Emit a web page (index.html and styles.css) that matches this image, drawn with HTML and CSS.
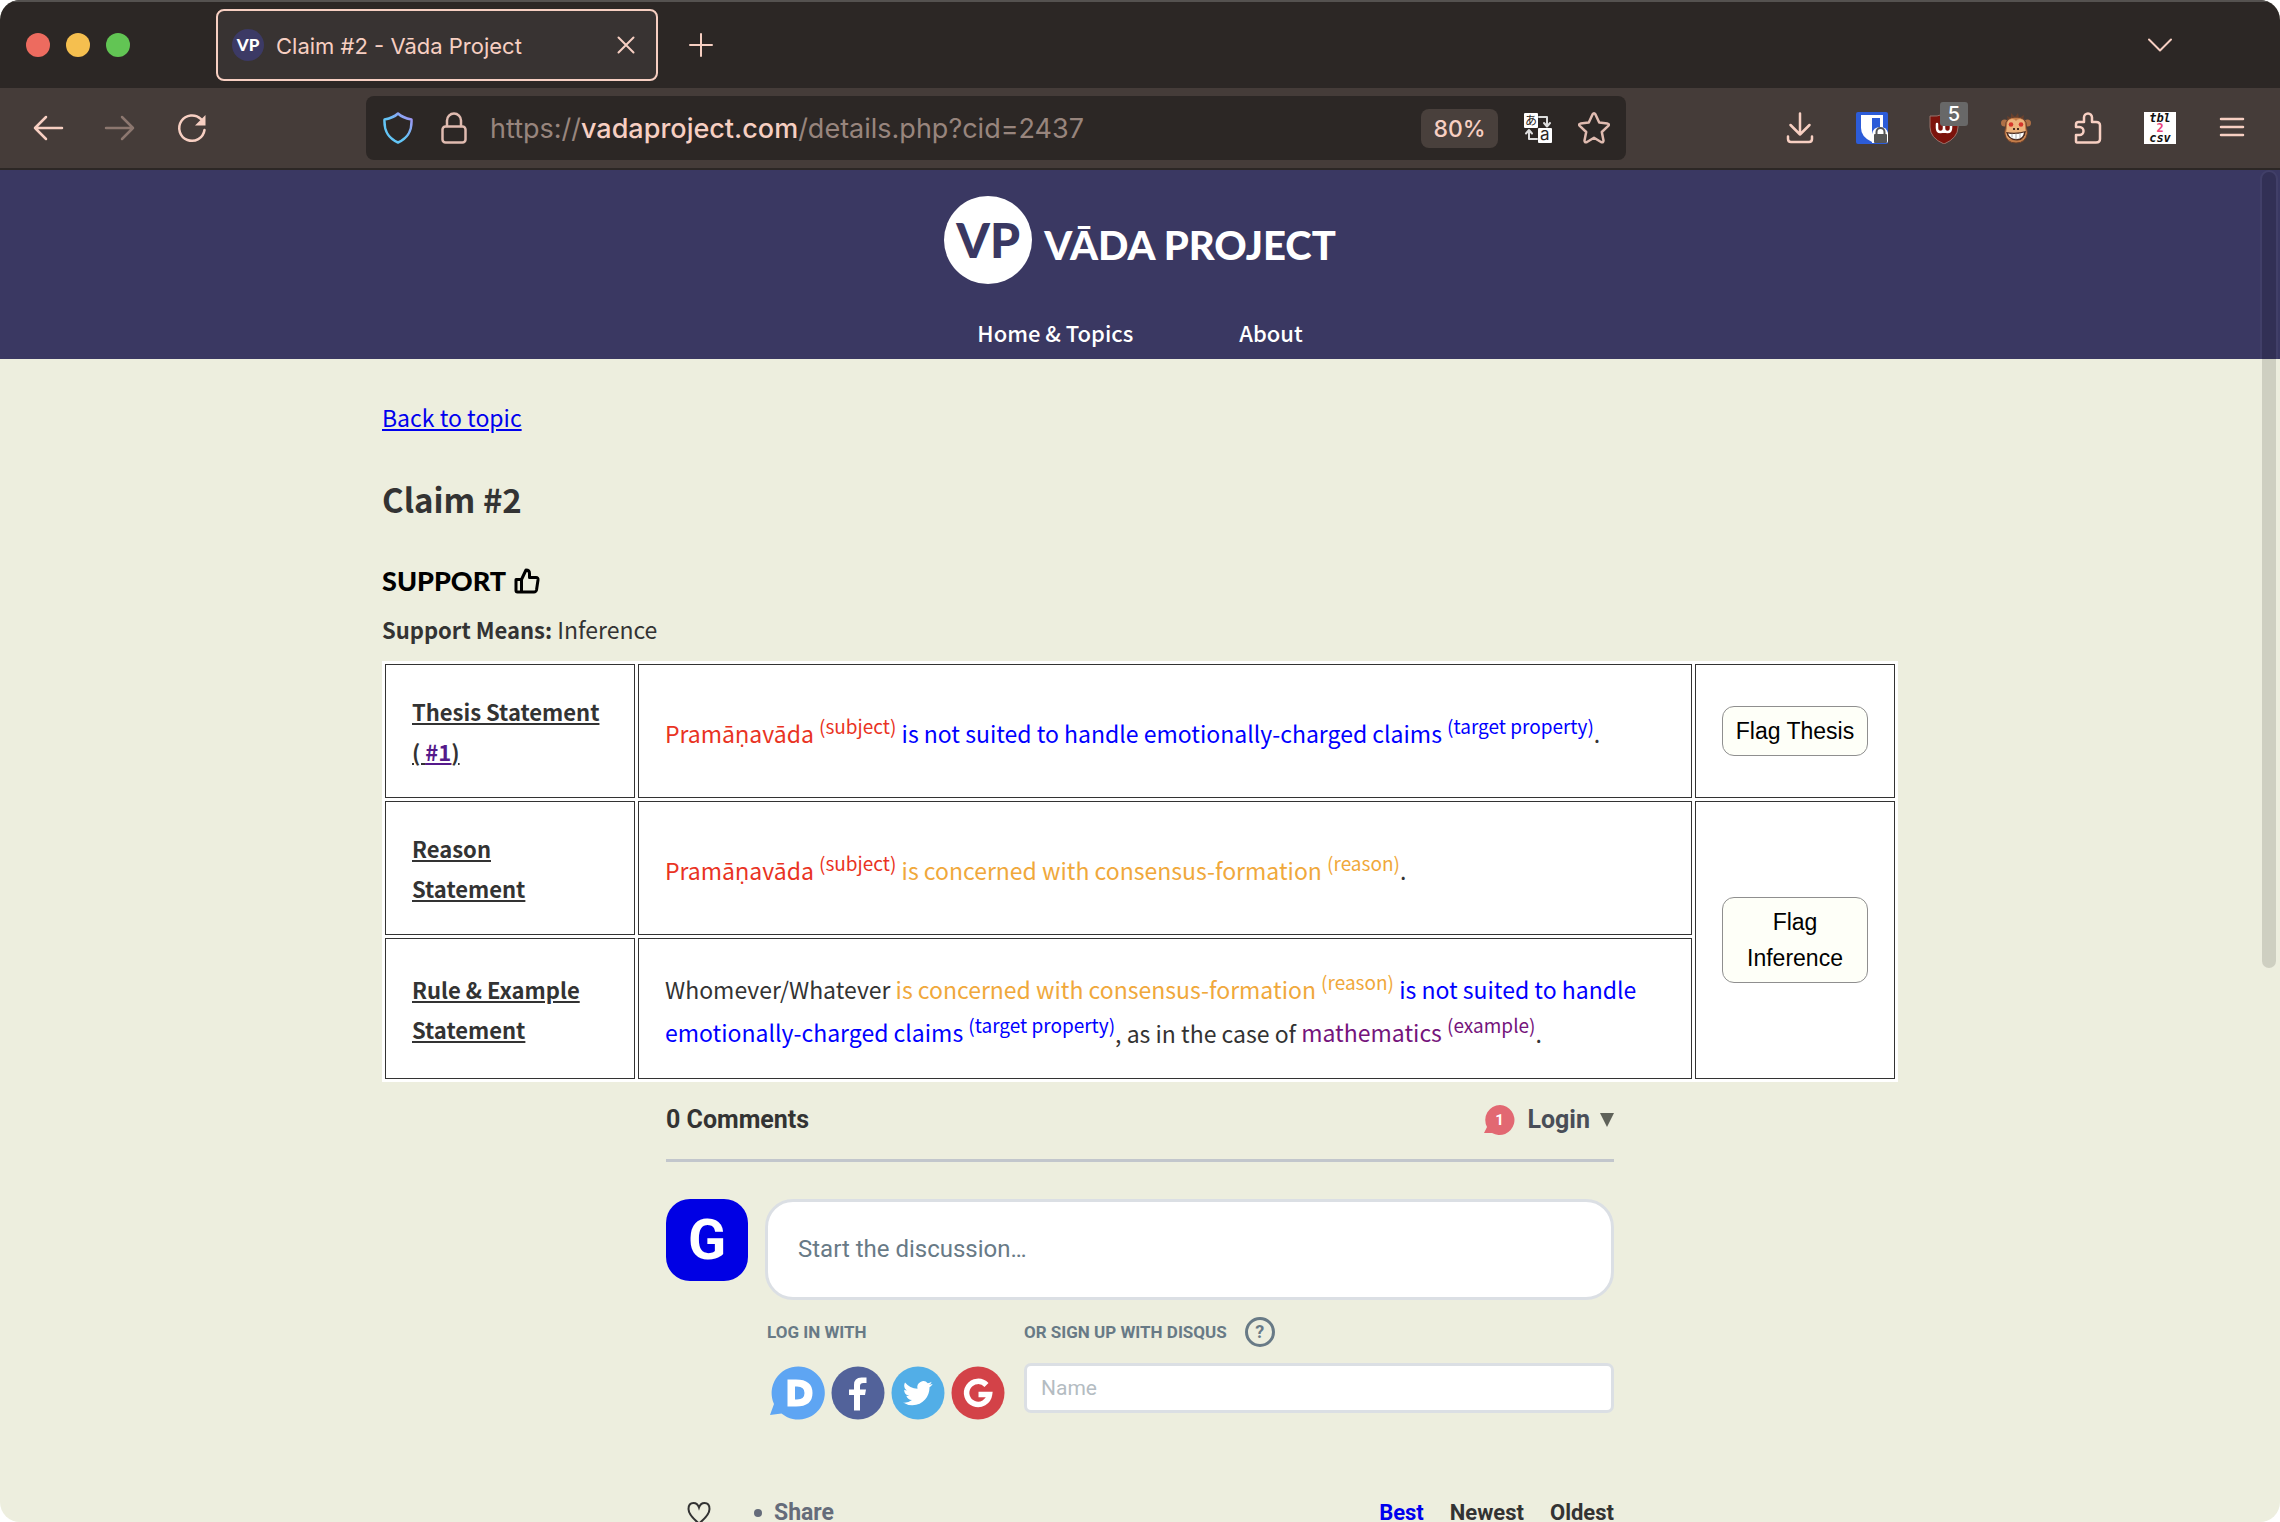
FILE: index.html
```html
<!DOCTYPE html>
<html lang="en">
<head>
<meta charset="utf-8">
<title>Claim #2 - Vāda Project</title>
<link rel="stylesheet" href="styles.css">
</head>
<body>
<div class="window">
  <div class="tabbar">
    <div class="lights"><span class="light red"></span><span class="light yellow"></span><span class="light green"></span></div>
    <div class="tab">
      <span class="favicon">VP</span>
      <span class="tab-title">Claim #2 - Vāda Project</span>
      <button class="icon-btn" aria-label="Close tab"><svg width="18" height="18" viewBox="0 0 18 18"><path d="M1.5 1.5l15 15M16.500 1.500l-15 15"/></svg></button>
    </div>
    <button class="icon-btn new-tab" aria-label="New tab"><svg width="24" height="24" viewBox="0 0 24 24"><path d="M12 1v22M1 12h22"/></svg></button>
    <button class="icon-btn all-tabs" aria-label="List all tabs"><svg width="26" height="16" viewBox="0 0 26 16"><path d="M2 2.500l11 11 11-11"/></svg></button>
  </div>

  <div class="toolbar">
    <div class="nav-buttons">
      <button class="icon-btn" aria-label="Back"><svg width="32" height="32" viewBox="0 0 32 32"><path d="M30 16H3M14 5L3 16l11 11"/></svg></button>
      <button class="icon-btn dim" aria-label="Forward"><svg width="32" height="32" viewBox="0 0 32 32"><path d="M2 16h27M18 5l11 11-11 11"/></svg></button>
      <button class="icon-btn" aria-label="Reload"><svg width="32" height="32" viewBox="0 0 32 32"><path d="M28.500 18A12.700 12.700 0 1 1 25 7.200"/><path class="solid" d="M29.500 3v10.500H19z"/></svg></button>
    </div>
    <div class="urlbar">
      <svg width="32" height="32" viewBox="0 0 32 32"><defs><linearGradient id="sg" x1="0" y1="1" x2="1" y2="0"><stop offset=".45" stop-color="#63c5f6"/><stop offset="1" stop-color="#a98df2"/></linearGradient></defs><path stroke="url(#sg)" d="M16 1.500C12 5.500 7.500 6.500 2.500 7.500 2 18 5 25.500 16 30.500 27 25.500 30 18 29.500 7.500 24.500 6.500 20 5.500 16 1.500z"/></svg>
      <svg class="lock" width="28" height="32" viewBox="0 0 28 32"><rect x="2.500" y="14.500" width="23" height="16" rx="3"/><path d="M7 14V8.500a7 7 0 0 1 14 0V14"/></svg>
      <div class="url">https://<b>vadaproject.com</b>/details.php?cid=2437</div>
      <button class="zoom-level">80%</button>
      <button class="icon-btn" aria-label="Translate page"><svg width="28" height="30" viewBox="0 0 28 30"><rect class="white" width="14" height="15" rx="1"/><rect class="white" x="14" y="15" width="14" height="15" rx="1"/><path class="thin light-line" d="M15 4h8v9M20 10l3 3.500 3-3.500M13 26H5v-8M2 20.500L5 17l3 3.500"/><text x="1" y="12" class="glyph-ja">あ</text><text x="16" y="27" class="glyph-a">a</text></svg></button>
      <button class="icon-btn star" aria-label="Bookmark this page"><svg width="32" height="32" viewBox="0 0 32 32"><path d="M14.500 2.500Q16 0 17.500 2.500l3.700 8.100 8.300 1Q32 12.200 30 14.200l-6.200 5.800 1.700 8.400Q25.600 31 23 30l-7-4.200L9 30Q6.400 31 6.500 28.400L8.200 20 2 14.200Q0 12.200 2.500 11.600l8.300-1z"/></svg></button>
    </div>
    <div class="extensions">
      <button class="icon-btn" aria-label="Downloads"><svg width="32" height="32" viewBox="0 0 32 32"><path d="M16 1.500v21M6.500 13l9.500 9.500L25.500 13M4 24.500v2.500q0 3 3 3h18q3 0 3-3v-2.500"/></svg></button>
      <button class="icon-btn" aria-label="Password manager"><svg width="32" height="32" viewBox="0 0 32 32"><rect width="32" height="32" rx="2" fill="#2c5cd8" stroke="none"/><path class="white" d="M5 3h22v13q0 9-11 14Q5 25 5 16z"/><path fill="#2c5cd8" stroke="none" d="M16 6h8v10q0 5-8 10z"/><path class="white" d="M16 31v-9q1-7 8.500-7 6 0 7.500 6v8q0 2-2 2z"/><rect x="18" y="22" width="13" height="9" rx="1" fill="#555" stroke="none"/><path class="thin lock-loop" d="M20.500 22v-2a4 4 0 0 1 8 0v2"/></svg></button>
      <button class="icon-btn ublock" aria-label="Content blocker"><svg width="32" height="32" viewBox="0 0 32 32"><path class="ublock-shield" d="M16 2q7 3 14 2v11q0 11-14 17Q2 26 2 15V4q7 1 14-2z"/><path class="white-line" d="M9 12v4q0 4 3.500 4t3.500-4v-3 3q0 4 3.500 4t3.500-4v-4"/></svg><span class="badge">5</span></button>
      <button class="icon-btn" aria-label="User scripts"><svg class="monkey" width="32" height="32" viewBox="0 0 32 32"><path fill="#68402d" d="M8 9L7 4l4 2 0-5 4 4 3-4 1 5 5-3-1 6z"/><circle cx="4.500" cy="11" r="3.500" fill="#ae7046"/><circle cx="27.500" cy="11" r="3.500" fill="#ae7046"/><path fill="#c47c48" class="outlined" d="M16 5q11 0 10.500 10l1 6q-1.500 10-11.500 10T4.500 21l1-6Q5 5 16 5z"/><path fill="#edb27c" d="M7 13q0-6 5-6 3 0 4 2 1-2 4-2 5 0 5 6v3l1 5q-1 4-3 6H9q-3-2-3-6l1-5z"/><circle cx="11" cy="12.500" r="2.300" fill="#d6352c"/><circle cx="21" cy="12.500" r="2.300" fill="#d6352c"/><path fill="#4c2c20" d="M13 16h2v2h-2zM17 16h2v2h-2zM6 20q10 2 20-1-1 9.500-9 9.500-9 0-11-8.500z"/><path fill="#fff" d="M8 21.500q8 1.500 16-1-1 6.500-7 6.500-7 0-9-5.500z"/><path class="teeth" d="M12 22v3M16 22v5M20 21.500v4"/></svg></button>
      <button class="icon-btn" aria-label="Extensions"><svg width="32" height="32" viewBox="0 0 32 32"><path d="M5 30.500h19q4 0 4-3.500V13.500q0-3.500-4-3.500h-4V5.500a4 4 0 0 0-8 0V10H6.500Q4 10 4 12.500V15h3.500a4 4 0 0 1 0 8H4v6q0 1.500 1 1.500z"/></svg></button>
      <button class="icon-btn tbl" aria-label="Table to CSV"><span>tbl</span><span class="two">2</span><span>csv</span></button>
      <button class="icon-btn" aria-label="Open menu"><svg width="32" height="32" viewBox="0 0 32 32"><path d="M5 7h22M5 15h22M5 23h22"/></svg></button>
    </div>
  </div>

  <div class="page">
    <header class="site-header">
      <a class="logo" href="#"><span class="logo-mark">VP</span><span class="logo-name">VĀDA PROJECT</span></a>
      <nav class="site-nav"><a href="#">Home &amp; Topics</a><a href="#">About</a></nav>
    </header>

    <main class="content">
      <a class="back" href="#">Back to topic</a>
      <h1>Claim #2</h1>
      <h2>SUPPORT <svg width="26" height="26" viewBox="0 0 26 26"><path d="M2 11.500h5.500V24H3.500Q2 24 2 22.500zM7.500 11.500L12 2q3.500 0 3.500 3.500V9.500H22q2.300 0 2 2.500l-1.500 10q-.5 2-2.500 2H7.500"/></svg></h2>
      <p class="means"><b>Support Means:</b> Inference</p>

      <table class="claims">
        <colgroup><col class="col-label"><col><col class="col-flag"></colgroup>
        <tr>
          <th scope="row">Thesis Statement ( <a href="#">#1</a>)</th>
          <td><span class="subject">Pramāṇavāda <sup>(subject)</sup></span> <span class="target">is not suited to handle emotionally-charged claims <sup>(target property)</sup></span>.</td>
          <td><button class="flag">Flag Thesis</button></td>
        </tr>
        <tr>
          <th scope="row">Reason Statement</th>
          <td><span class="subject">Pramāṇavāda <sup>(subject)</sup></span> <span class="reason">is concerned with consensus-formation <sup>(reason)</sup></span>.</td>
          <td rowspan="2"><button class="flag">Flag Inference</button></td>
        </tr>
        <tr>
          <th scope="row">Rule &amp; Example Statement</th>
          <td>Whomever/Whatever <span class="reason">is concerned with consensus-formation <sup>(reason)</sup></span> <span class="target">is not suited to handle emotionally-charged claims <sup>(target property)</sup></span>, as in the case of <span class="example">mathematics <sup>(example)</sup></span>.</td>
        </tr>
      </table>

      <section class="comments">
        <div class="comments-head">
          <span>0 Comments</span>
          <button class="login"><span class="bubble"><svg width="32" height="32" viewBox="0 0 32 32"><path fill="#e26872" d="M17 1a15 15 0 1 1-8 28L1 29l3-6A15 15 0 0 1 17 1z"/></svg><span class="count">1</span></span>Login<svg width="14" height="14" viewBox="0 0 14 14"><path fill="#5f6259" d="M0 0h14L7 14z"/></svg></button>
        </div>

        <div class="compose">
          <div class="avatar">G</div>
          <div class="compose-body">
            <textarea class="message" rows="1" aria-label="Comment" placeholder="Start the discussion…"></textarea>
            <div class="auth">
              <div class="login-with">
                <h3>LOG IN WITH</h3>
                <div class="social">
                  <button aria-label="Disqus"><svg width="56" height="54" viewBox="0 0 56 54"><path fill="#5ea5f3" d="M29.500 .5a26.500 26.500 0 1 1-17 47L1 49l4-11A26.500 26.500 0 0 1 29.500 .5z"/><path fill="#fff" fill-rule="evenodd" d="M18.500 13.500H27Q43.500 13.500 43.500 27T27 40.500h-8.500zM26 20.500v13h2q7.500 0 7.500-6.500T28 20.500z"/></svg></button>
                  <button aria-label="Facebook"><svg width="54" height="54" viewBox="0 0 54 54"><circle cx="27" cy="27" r="26.500" fill="#52629a"/><path fill="#fff" d="M23 44.500V29h-5v-5.500h5V19q0-7.500 7.500-7.500h5V17h-3q-3.500 0-3.500 3v3.500h6L34 29h-5v15.500z"/></svg></button>
                  <button aria-label="Twitter"><svg width="54" height="54" viewBox="0 0 54 54"><circle cx="27" cy="27" r="26.500" fill="#52aee7"/><path fill="#fff" transform="translate(12 12.500) scale(1.230)" d="M23.950 4.570a10 10 0 0 1-2.820.770 4.960 4.960 0 0 0 2.160-2.720c-.950.550-2 .950-3.130 1.180a4.920 4.920 0 0 0-8.380 4.480C7.690 8.090 4.070 6.130 1.640 3.160a4.820 4.820 0 0 0-.670 2.480c0 1.710.870 3.210 2.190 4.100a4.900 4.900 0 0 1-2.230-.620v.060a4.920 4.920 0 0 0 3.950 4.830 5 5 0 0 1-2.210.080 4.940 4.940 0 0 0 4.600 3.420A9.870 9.870 0 0 1 0 19.540a14 14 0 0 0 7.550 2.210c9.050 0 14-7.500 14-13.980 0-.210 0-.420-.020-.630a9.940 9.940 0 0 0 2.460-2.550z"/></svg></button>
                  <button aria-label="Google"><svg width="54" height="54" viewBox="0 0 54 54"><circle cx="27" cy="27" r="26.500" fill="#d34248"/><path fill="none" stroke="#fff" stroke-width="5.500" d="M35.500 19A11.500 11.500 0 1 0 38.500 28.500H27.500"/></svg></button>
                </div>
              </div>
              <div class="signup">
                <label for="name">OR SIGN UP WITH DISQUS <span class="help">?</span></label>
                <input id="name" type="text" placeholder="Name">
              </div>
            </div>
          </div>
        </div>

        <div class="thread-bar">
          <button class="heart" aria-label="Favorite"><svg width="26" height="24" viewBox="0 0 26 24"><path d="M13 22.500Q2.500 14 2.500 8 2.500 2 7.500 2 11.500 2 13 6.500 14.500 2 18.500 2 23.500 2 23.500 8 23.500 14 13 22.500z"/></svg></button>
          <button class="share"><i class="dot"></i>Share</button>
          <div class="sort"><a class="active" href="#">Best</a><a href="#">Newest</a><a href="#">Oldest</a></div>
        </div>
      </section>
    </main>
    <div class="scrollbar"></div>
  </div>
</div>
</body>
</html>
```
FILE: styles.css
```css
* { box-sizing: border-box; }
html { background: #fff; }
body { margin: 0; color: #333; font: 23px/40px "Noto Sans CJK JP", "Noto Sans", sans-serif; }
button { padding: 0; border: 0; background: none; font: inherit; color: inherit; display: flex; align-items: center; justify-content: center; }
svg { display: block; flex: none; }

.window { height: 100vh; display: flex; flex-direction: column; overflow: hidden; border-radius: 20px; background: #edeede; }

/* Browser chrome */
.tabbar, .toolbar { color: #f7cfc2; font-family: Inter, sans-serif; }
.tabbar svg, .toolbar svg { fill: none; stroke: currentColor; stroke-width: 2.5; stroke-linecap: round; stroke-linejoin: round; }
.tabbar svg { stroke-width: 2; }
.tabbar { flex: none; height: 88px; display: flex; align-items: center; padding: 0 107px 0 26px; background: #2c2725; border-top: 2px solid #555250; }
.lights { display: flex; gap: 16px; margin-right: 86px; }
.light { width: 24px; height: 24px; border-radius: 50%; }
.red { background: #ed6b5f; }
.yellow { background: #f5bf4f; }
.green { background: #62c554; }
.tab { width: 442px; height: 72px; display: flex; align-items: center; padding: 0 21px 0 14px; border: 2px solid #f7cfc2; border-radius: 8px; background: #383332; font-size: 22px; }
.favicon { width: 32px; height: 32px; margin-right: 12px; border-radius: 50%; background: #3c3a65; color: #fff; font: 900 17px/32px Lato, sans-serif; text-align: center; }
.tab-title { flex: 1; padding-top: 2px; }
.new-tab { margin-left: 31px; }
.all-tabs { margin-left: auto; }

.toolbar { flex: none; height: 82px; display: flex; align-items: center; padding: 0 32px; background: #453c39; border-bottom: 2px solid #2c2725; }
.nav-buttons { display: flex; gap: 40px; width: 334px; }
.dim { color: #8c776f; }
.toolbar .solid { fill: currentColor; stroke: none; }
.urlbar { flex: 0 1 1260px; height: 64px; display: flex; align-items: center; padding: 0 16px; border-radius: 8px; background: #2c2725; }
.lock { margin: 0 22px 0 26px; color: #e0bbb0; }
.url { flex: 1; padding-top: 2px; font-size: 27px; color: #98857d; white-space: nowrap; }
.url b { font-weight: 500; color: #f7cfc2; }
.zoom-level { width: 77px; height: 39px; margin-right: 26px; padding-top: 2px; border-radius: 8px; background: #49403c; font-size: 23px; font-weight: 500; }
.star { margin-left: 26px; color: #e0bbb0; }
.toolbar .white { fill: #fff; stroke: none; }
.toolbar .thin { stroke-width: 2; }
.light-line { stroke: #ddd; }
.white-line { stroke: #fff; }
.lock-loop { stroke: #555; }
.toolbar .monkey { stroke: none; }
.outlined { stroke: #68402d; stroke-width: 1; }
.teeth { stroke: #aaa; stroke-width: 1; }
.ublock-shield { fill: #7c130c; stroke: #99726b; stroke-width: 1; }
.toolbar .glyph-ja, .toolbar .glyph-a { fill: #2c2725; stroke: none; font: 12px "Noto Sans CJK JP", sans-serif; }
.toolbar .glyph-a { font: 17px Inter, sans-serif; }
.extensions { margin-left: auto; display: flex; gap: 40px; }
.ublock { position: relative; }
.badge { position: absolute; left: 12px; top: -10px; width: 28px; height: 24px; border-radius: 3px; background: #686868; color: #fff; font: 500 20px/24px Inter, sans-serif; text-align: center; }
.tbl { width: 32px; height: 32px; flex-direction: column; background: #fff; color: #111; font: italic bold 12px/10px "DejaVu Sans Mono", monospace; }
.two { color: #e8417c; font-style: normal; }

/* Page */
.page { position: relative; flex: 1; min-height: 0; overflow: hidden; }
.scrollbar { position: absolute; right: 4px; top: 2px; width: 14px; height: 796px; border-radius: 7px; background: rgba(0, 0, 0, .13); box-shadow: 0 0 0 2px rgba(255, 255, 255, .04); }
.site-header { height: 189px; display: flex; flex-direction: column; align-items: center; justify-content: space-between; padding: 26px 0 7px; background: #3a3862; }
.site-header a { color: #fff; text-decoration: none; }
.logo { display: flex; align-items: center; gap: 12px; font-family: Lato, sans-serif; font-weight: 900; }
.logo-mark { width: 88px; height: 88px; border-radius: 50%; background: #fff; color: #3a3862; font-size: 48px; line-height: 88px; text-align: center; }
.logo-name { font-size: 40px; padding-top: 10px; }
.site-nav { display: flex; gap: 106px; font-size: 22px; font-weight: 500; }

.content { max-width: 1516px; margin: 0 auto; padding-top: 38px; }
.back { display: block; width: max-content; color: #00e; }
h1 { margin: 40px 0; font-size: 33px; line-height: 44px; }
h2 { display: flex; align-items: center; gap: 8px; margin: 0; color: #000; font: 900 27px/40px Lato, sans-serif; }
h2 svg { fill: none; stroke: #000; stroke-width: 3; stroke-linejoin: round; }
.means { margin: 8px 0 12px; }
.means b { font-size: 22px; }

.claims { width: 100%; table-layout: fixed; border-spacing: 3px; background: #fff; }
.col-label { width: 250px; }
.col-flag { width: 200px; }
.claims th, .claims td { padding: 26px; border: 1px solid #333; text-align: left; vertical-align: middle; }
.claims th { font-size: 22px; text-decoration: underline; }
.claims th a { color: #551a8b; }
.claims sup { font-size: 19px; line-height: 34px; }
.subject { color: #e93323; }
.target { color: #00f; }
.reason { color: #f0a83b; }
.example { color: #75147c; }
.flag { width: 100%; padding: 6px 8px; border: 1px solid #8f8f8f; border-radius: 12px; background: #fefff8; color: #000; font: 23px/36px "Liberation Sans", Arial, sans-serif; }

/* Comments */
.comments { max-width: 948px; margin: 0 auto; font-family: Roboto, sans-serif; }
.comments-head { display: flex; justify-content: space-between; align-items: center; height: 80px; padding-bottom: 2px; border-bottom: 3px solid #c2c6cc; font-size: 25px; font-weight: 700; }
.login { gap: 10px; color: #494e58; }
.bubble { position: relative; margin-right: 2px; }
.count { position: absolute; inset: 0; color: #fff; font-size: 15px; line-height: 32px; text-align: center; }
.compose { display: flex; gap: 17px; padding-top: 37px; }
.avatar { flex: none; width: 82px; height: 82px; border-radius: 24px; background: #0000e4; color: #fff; font-size: 56px; font-weight: 700; line-height: 82px; text-align: center; }
.compose-body { flex: 1; }
textarea, input { display: block; width: 100%; border: 3px solid #dbdfe4; background: #fff; font-family: Roboto, sans-serif; resize: none; outline: 0; }
.message { height: 101px; padding: 32px 30px; border-radius: 28px; font-size: 24px; line-height: 30px; overflow: hidden; }
.message::placeholder { color: #687a86; }
.auth { display: flex; padding-top: 12px; }
.login-with { width: 259px; padding-left: 2px; }
h3, .signup label { height: 40px; margin: 0; color: #687a86; font-size: 17px; font-weight: 700; line-height: 40px; }
.signup { flex: 1; }
.signup label { display: flex; align-items: center; gap: 18px; }
.help { width: 30px; height: 30px; border: 3px solid #687a86; border-radius: 50%; font-size: 18px; line-height: 24px; text-align: center; }
.social { display: flex; gap: 6px; padding: 14px 0 0 2px; }
input { height: 50px; margin-top: 11px; padding: 0 14px; border-radius: 7px; font-size: 21px; }
input::placeholder { color: #b4bcc2; }
.thread-bar { display: flex; align-items: center; margin-top: 73px; padding-left: 20px; font-size: 23px; font-weight: 700; }
.heart svg { fill: none; stroke: #333; stroke-width: 2; }
.share { gap: 12px; margin-left: 42px; color: #656c7a; }
.dot { width: 8px; height: 8px; border-radius: 50%; background: #656c7a; }
.sort { display: flex; gap: 26px; margin-left: auto; font-size: 22px; }
.sort a { color: #333; text-decoration: none; }
.sort .active { color: #00e; }
```
